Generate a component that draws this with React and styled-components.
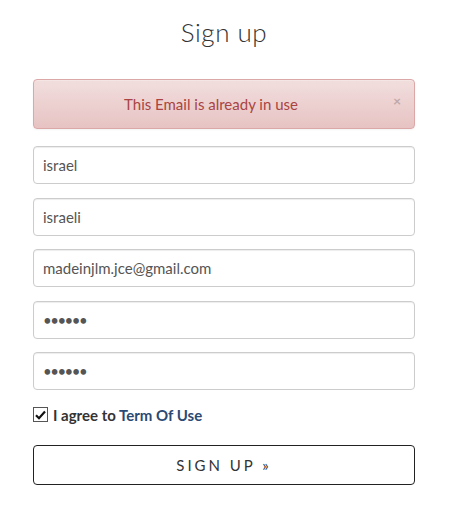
import React from 'react';
import styled, { createGlobalStyle } from 'styled-components';

const GlobalStyle = createGlobalStyle`
  body {
    margin: 0;
    background: #fff;
    font-family: Lato, "Open Sans", "Liberation Sans", sans-serif;
    color: #555;
  }
`;

const Page = styled.div`
  width: 382px;
  padding: 14px 0 0 33px;
  display: flex;
  flex-direction: column;
`;

const Title = styled.h2`
  margin: 0 0 29px;
  text-align: center;
  font-size: 26px;
  font-weight: 300;
  color: #333;
  line-height: 36px;
  letter-spacing: 0.5px;
`;

const Alert = styled.div`
  position: relative;
  height: 48px;
  display: flex;
  align-items: center;
  justify-content: center;
  padding-right: 26px;
  margin-bottom: 17px;
  border: 1px solid #dca7a7;
  border-radius: 4px;
  background: linear-gradient(to bottom, #f2dede 0%, #e7c3c3 100%);
  color: #a94442;
  font-size: 15px;
  box-shadow: inset 0 1px 0 rgba(255, 255, 255, 0.25), 0 1px 2px rgba(0, 0, 0, 0.05);
`;

const Close = styled.span`
  position: absolute;
  right: 13px;
  top: 12px;
  font-size: 14px;
  font-weight: 700;
  color: #000;
  opacity: 0.2;
`;

const Form = styled.form`
  display: flex;
  flex-direction: column;
  gap: 13.5px;
`;

const Input = styled.input`
  box-sizing: border-box;
  width: 100%;
  height: 38px;
  margin: 0;
  padding: 0 9px;
  border: 1px solid #ccc;
  border-radius: 4px;
  font-family: inherit;
  font-size: 15px;
  color: #555;
  outline: none;
  box-shadow: inset 0 1px 1px rgba(0, 0, 0, 0.075);
  letter-spacing: ${p => (p.type === 'password' ? '-1.5px' : '0')};
`;

const Agree = styled.label`
  display: flex;
  align-items: center;
  gap: 5px;
  margin-top: 2px;
  font-size: 15px;
  font-weight: 700;
  color: #333;
`;

const Box = styled.span`
  box-sizing: border-box;
  width: 15px;
  height: 15px;
  border: 1px solid #555;
  background: #fff;
  display: flex;
  align-items: center;
  justify-content: center;
`;

const Link = styled.a`
  color: #2a4a75;
  text-decoration: none;
`;

const Button = styled.button`
  box-sizing: border-box;
  width: 100%;
  height: 40px;
  margin-top: 8px;
  background: #fff;
  border: 1px solid #222;
  border-radius: 4px;
  font-family: inherit;
  font-size: 15px;
  font-weight: 400;
  letter-spacing: 3px;
  color: #333;
  cursor: pointer;
`;

export default function App() {
  return (
    <>
      <GlobalStyle />
      <Page>
        <Title>Sign up</Title>
        <Alert>
          This Email is already in use
          <Close>×</Close>
        </Alert>
        <Form>
          <Input defaultValue="israel" />
          <Input defaultValue="israeli" />
          <Input defaultValue="madeinjlm.jce@gmail.com" />
          <Input type="password" defaultValue="123456" />
          <Input type="password" defaultValue="123456" />
          <Agree>
            <Box>
              <svg width="11" height="10" viewBox="0 0 11 10">
                <path d="M1 5.2 L4 8.2 L10 1.5" fill="none" stroke="#111" strokeWidth="2.2" />
              </svg>
            </Box>
            <span>
              I agree to <Link href="#">Term Of Use</Link>
            </span>
          </Agree>
          <Button type="button">SIGN UP »</Button>
        </Form>
      </Page>
    </>
  );
}
